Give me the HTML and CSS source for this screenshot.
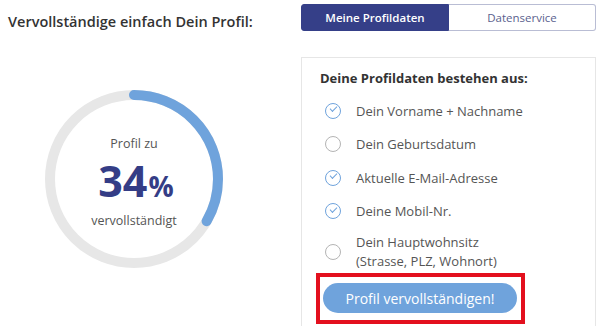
FILE: index.html
```
<!DOCTYPE html>
<html>
<head>
	<meta charset="UTF-8">
	<title>Profil</title>
	<link rel="stylesheet" href="styles.css">
</head>
<body>
	<div class="page">
		<div class="column left">
			<div class="title">Vervollständige einfach Dein Profil:</div>
			<div class="gauge">
				<svg width="180" height="180" viewBox="0 0 180 180">
					<circle cx="90" cy="90" r="84" fill="none" stroke="#e7e7e7" stroke-width="10"/>
					<circle cx="90" cy="90" r="84" fill="none" stroke="#6fa3dc" stroke-width="10" stroke-linecap="round" stroke-dasharray="176 600" transform="rotate(-90 90 90)"/>
				</svg>
				<div class="gaugeText">
					<div class="gaugeLabel">Profil zu</div>
					<div class="gaugeValue">34<span>%</span></div>
					<div class="gaugeLabel bottom">vervollständigt</div>
				</div>
			</div>
		</div>
		<div class="column right">
			<div class="tabs">
				<div class="tab active">Meine Profildaten</div>
				<div class="tab">Datenservice</div>
			</div>
			<div class="panel">
				<div class="panelHeading">Deine Profildaten bestehen aus:</div>
				<ul class="checklist">
					<li class="done"><span class="check"></span><span>Dein Vorname + Nachname</span></li>
					<li><span class="check"></span><span>Dein Geburtsdatum</span></li>
					<li class="done"><span class="check"></span><span>Aktuelle E-Mail-Adresse</span></li>
					<li class="done"><span class="check"></span><span>Deine Mobil-Nr.</span></li>
					<li class="twoLines"><span class="check"></span><span>Dein Hauptwohnsitz<br>(Strasse, PLZ, Wohnort)</span></li>
				</ul>
				<div class="highlight">
					<button class="cta">Profil vervollständigen!</button>
				</div>
			</div>
		</div>
	</div>
</body>
</html>
```

FILE: styles.css
```
body {
	margin: 0;
	padding: 0;
	background-color: #fff;
	font-family: "Open Sans", sans-serif;
	color: #4d4d4d;
	overflow: hidden;
}
.page {
	display: flex;
	flex-direction: row;
	height: 326px;
	overflow: hidden;
}
.left {
	width: 301px;
}
.right {
	width: 295px;
}
.title {
	font-size: 14.5px;
	font-weight: 600;
	color: #333;
	padding: 12px 0 0 8px;
	height: 20px;
	line-height: 20px;
}
.gauge {
	position: relative;
	width: 180px;
	height: 180px;
	margin: 57px 0 0 44px;
}
.gauge svg {
	display: block;
}
.gaugeText {
	position: absolute;
	inset: 0;
	display: flex;
	flex-direction: column;
	align-items: center;
	padding-top: 46px;
}
.gaugeLabel {
	font-size: 12.5px;
	color: #555;
	line-height: 18px;
}
.gaugeLabel.bottom {
	margin-top: 4px;
}
.gaugeValue {
	font-size: 43px;
	font-weight: 700;
	color: #343d86;
	line-height: 44px;
	margin: 6px 0 0 4px;
}
.gaugeValue span {
	font-size: 28px;
	margin-left: 1px;
}
.tabs {
	display: flex;
	margin-top: 4px;
	height: 27px;
}
.tab {
	flex: 1;
	box-sizing: border-box;
	display: flex;
	align-items: center;
	justify-content: center;
	font-size: 11.5px;
	color: #5a5f8e;
	border: 1px solid #b9bdd4;
	border-left: none;
	border-radius: 0 3px 3px 0;
}
.tab.active {
	background-color: #353f88;
	border: 1px solid #353f88;
	color: #fff;
	font-weight: 600;
	border-radius: 3px 0 0 3px;
}
.panel {
	margin-top: 26px;
	border: 1px solid #e6e6e6;
	border-bottom: none;
	height: 257px;
	padding: 11px 0 0 13px;
}
.panelHeading {
	font-size: 13px;
	font-weight: 700;
	color: #333;
	line-height: 18px;
	padding-left: 5px;
}
.checklist {
	list-style: none;
	margin: 7px 0 0 0;
	padding: 0;
}
.checklist li {
	display: flex;
	align-items: center;
	height: 33.5px;
	font-size: 13px;
	color: #555;
}
.checklist li.twoLines {
	box-sizing: border-box;
	height: 45px;
	padding-top: 3px;
	line-height: 19px;
}
.check {
	box-sizing: border-box;
	width: 16px;
	height: 16px;
	border: 1.5px solid #b4b4b4;
	border-radius: 50%;
	margin: 0 15px 0 10px;
	position: relative;
	flex-shrink: 0;
}
.done .check {
	border-color: #6fa3dc;
}
.done .check::after {
	content: "";
	position: absolute;
	left: 3.5px;
	top: 2.5px;
	width: 6px;
	height: 3px;
	border-left: 1.5px solid #6fa3dc;
	border-bottom: 1.5px solid #6fa3dc;
	transform: rotate(-45deg);
}
.highlight {
	width: 198px;
	height: 37px;
	border: 4px solid #e3101e;
	margin: 0 0 0 1px;
	padding: 6px 0 0 3px;
}
.cta {
	display: block;
	width: 194px;
	height: 30px;
	border: none;
	border-radius: 15px;
	background-color: #6fa3dc;
	color: #fff;
	font-family: "Open Sans", sans-serif;
	font-size: 14px;
	padding: 0;
}
```
